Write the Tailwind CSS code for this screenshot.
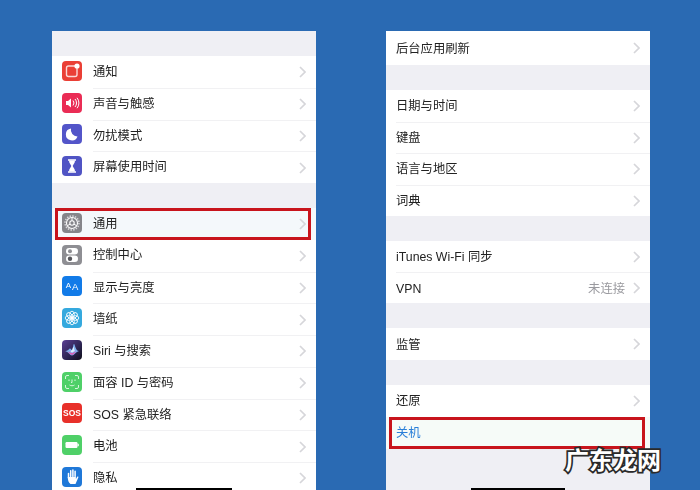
<!DOCTYPE html>
<html lang="zh-CN">
<head>
  <meta charset="UTF-8">
  <title>设置</title>
  <script src="https://cdn.jsdelivr.net/npm/@tailwindcss/browser@4"></script>
</head>
<body class="bg-[#2a6ab3] font-['Liberation_Sans','Noto_Sans_CJK_SC',sans-serif] text-[12.3px] text-[#222]">
  <div class="relative w-[700px] h-[490px] overflow-hidden flex pt-[31px] pl-[52px] gap-[70px]">

    <!-- Left phone -->
    <section class="w-[264px] h-[459px] shrink-0 bg-[#efeff4] overflow-hidden blur-[0.4px]">
      <div class="h-[25px]"></div>
      <div class="bg-white">
        <div class="h-[31.75px] flex items-center pl-[10px]">
          <svg class="w-[20px] h-[20px] shrink-0 mr-[11px] -mt-[2px]" viewBox="0 0 20 20"><rect width="20" height="20" rx="4" fill="#ea3f35"/><rect x="4.500" y="5" width="10.500" height="10.500" rx="2" fill="none" stroke="#fff" stroke-width="1.400" opacity=".8"/><circle cx="15" cy="5" r="2.600" fill="#fff"/></svg>
          <div class="flex-1 h-full flex items-center pr-[10px]">
            <span class="flex-1">通知</span>
            <svg class="w-[7px] h-[12px]" viewBox="0 0 7 12"><path d="M1 1l5 5-5 5" fill="none" stroke="#d6d6da" stroke-width="1.700"/></svg>
          </div>
        </div>
        <div class="h-[31.75px] flex items-center pl-[10px]">
          <svg class="w-[20px] h-[20px] shrink-0 mr-[11px] -mt-[2px]" viewBox="0 0 20 20"><rect width="20" height="20" rx="4" fill="#ea2c55"/><path d="M4 8h2l3-2.500v9L6 12H4z" fill="#fff"/><path d="M11 7.500a4 4 0 0 1 0 5M13 6a6 6 0 0 1 0 8M15 4.800a8 8 0 0 1 0 10.400" fill="none" stroke="#fff" stroke-width="1"/></svg>
          <div class="flex-1 h-full flex items-center pr-[10px] border-t border-[#f1f1f3]">
            <span class="flex-1">声音与触感</span>
            <svg class="w-[7px] h-[12px]" viewBox="0 0 7 12"><path d="M1 1l5 5-5 5" fill="none" stroke="#d6d6da" stroke-width="1.700"/></svg>
          </div>
        </div>
        <div class="h-[31.75px] flex items-center pl-[10px]">
          <svg class="w-[20px] h-[20px] shrink-0 mr-[11px] -mt-[2px]" viewBox="0 0 20 20"><rect width="20" height="20" rx="4" fill="#5355c9"/><path d="M9 4.500a6 6 0 1 0 6.500 8 6.500 6.500 0 0 1-6.500-8z" fill="#fff"/></svg>
          <div class="flex-1 h-full flex items-center pr-[10px] border-t border-[#f1f1f3]">
            <span class="flex-1">勿扰模式</span>
            <svg class="w-[7px] h-[12px]" viewBox="0 0 7 12"><path d="M1 1l5 5-5 5" fill="none" stroke="#d6d6da" stroke-width="1.700"/></svg>
          </div>
        </div>
        <div class="h-[31.75px] flex items-center pl-[10px]">
          <svg class="w-[20px] h-[20px] shrink-0 mr-[11px] -mt-[2px]" viewBox="0 0 20 20"><rect width="20" height="20" rx="4" fill="#5054c4"/><path d="M6 4h8M6 16h8" stroke="#fff" stroke-width="1.500"/><path d="M7 4.500h6c0 3-2 4-2.300 5.500.3 1.500 2.300 2.500 2.300 5.500H7c0-3 2-4 2.300-5.500C9 8.500 7 7.500 7 4.500z" fill="#fff"/></svg>
          <div class="flex-1 h-full flex items-center pr-[10px] border-t border-[#f1f1f3]">
            <span class="flex-1">屏幕使用时间</span>
            <svg class="w-[7px] h-[12px]" viewBox="0 0 7 12"><path d="M1 1l5 5-5 5" fill="none" stroke="#d6d6da" stroke-width="1.700"/></svg>
          </div>
        </div>
      </div>
      <div class="h-[25px]"></div>
      <div class="bg-white">
        <div class="relative h-[31.75px] flex items-center pl-[10px] bg-[#f4f8fb]">
          <svg class="w-[20px] h-[20px] shrink-0 mr-[11px] -mt-[2px]" viewBox="0 0 20 20"><rect width="20" height="20" rx="4" fill="#85858a"/><circle cx="10" cy="10" r="7" fill="none" stroke="#d8d8dc" stroke-width="1.500" stroke-dasharray="1.500 1.250"/><circle cx="10" cy="10" r="5.500" fill="none" stroke="#fff" stroke-width="1.100"/><circle cx="10" cy="10" r="2.200" fill="none" stroke="#fff" stroke-width="1.100"/><path d="M10 4.500v3.300M5.200 12.800l2.900-1.700M14.800 12.800l-2.900-1.700" stroke="#fff" stroke-width="1"/></svg>
          <div class="flex-1 h-full flex items-center pr-[10px]">
            <span class="flex-1">通用</span>
            <svg class="w-[7px] h-[12px]" viewBox="0 0 7 12"><path d="M1 1l5 5-5 5" fill="none" stroke="#d6d6da" stroke-width="1.700"/></svg>
          </div>
          <div class="absolute left-[3px] top-0 w-[256px] h-[32px] border-[3px] border-[#c8141c]"></div>
        </div>
        <div class="h-[31.75px] flex items-center pl-[10px]">
          <svg class="w-[20px] h-[20px] shrink-0 mr-[11px] -mt-[2px]" viewBox="0 0 20 20"><rect width="20" height="20" rx="4" fill="#8e8e93"/><rect x="4" y="3" width="12" height="6.500" rx="3.250" fill="#fff"/><circle cx="8" cy="6.250" r="2" fill="#8e8e93"/><rect x="4" y="10.500" width="12" height="6.500" rx="3.250" fill="#fff"/><circle cx="8" cy="13.750" r="2.200" fill="#55555a"/></svg>
          <div class="flex-1 h-full flex items-center pr-[10px]">
            <span class="flex-1">控制中心</span>
            <svg class="w-[7px] h-[12px]" viewBox="0 0 7 12"><path d="M1 1l5 5-5 5" fill="none" stroke="#d6d6da" stroke-width="1.700"/></svg>
          </div>
        </div>
        <div class="h-[31.75px] flex items-center pl-[10px]">
          <div class="w-[20px] h-[20px] shrink-0 mr-[11px] -mt-[2px] rounded-[4px] bg-[#127be8] text-white flex items-center justify-center gap-[1px] leading-none"><span class="text-[8px]">A</span><span class="text-[9.500px]">A</span></div>
          <div class="flex-1 h-full flex items-center pr-[10px] border-t border-[#f1f1f3]">
            <span class="flex-1">显示与亮度</span>
            <svg class="w-[7px] h-[12px]" viewBox="0 0 7 12"><path d="M1 1l5 5-5 5" fill="none" stroke="#d6d6da" stroke-width="1.700"/></svg>
          </div>
        </div>
        <div class="h-[31.75px] flex items-center pl-[10px]">
          <svg class="w-[20px] h-[20px] shrink-0 mr-[11px] -mt-[2px]" viewBox="0 0 20 20"><rect width="20" height="20" rx="4" fill="#35a9de"/><g fill="none" stroke="#fff" stroke-width=".9"><ellipse cx="10" cy="6.500" rx="2.300" ry="3.300"/><ellipse cx="10" cy="13.500" rx="2.300" ry="3.300"/><ellipse cx="6.500" cy="10" rx="3.300" ry="2.300"/><ellipse cx="13.500" cy="10" rx="3.300" ry="2.300"/><ellipse cx="7.500" cy="7.500" rx="2.300" ry="3.300" transform="rotate(-45 7.500 7.500)"/><ellipse cx="12.500" cy="7.500" rx="2.300" ry="3.300" transform="rotate(45 12.500 7.500)"/><ellipse cx="7.500" cy="12.500" rx="2.300" ry="3.300" transform="rotate(45 7.500 12.500)"/><ellipse cx="12.500" cy="12.500" rx="2.300" ry="3.300" transform="rotate(-45 12.500 12.500)"/></g></svg>
          <div class="flex-1 h-full flex items-center pr-[10px] border-t border-[#f1f1f3]">
            <span class="flex-1">墙纸</span>
            <svg class="w-[7px] h-[12px]" viewBox="0 0 7 12"><path d="M1 1l5 5-5 5" fill="none" stroke="#d6d6da" stroke-width="1.700"/></svg>
          </div>
        </div>
        <div class="h-[31.75px] flex items-center pl-[10px]">
          <svg class="w-[20px] h-[20px] shrink-0 mr-[11px] -mt-[2px]" viewBox="0 0 20 20"><defs><linearGradient id="siri" x1="0" y1="0" x2="1" y2="1"><stop offset="0" stop-color="#5b3f94"/><stop offset=".6" stop-color="#2b2350"/><stop offset="1" stop-color="#0e0e18"/></linearGradient></defs><rect width="20" height="20" rx="4" fill="url(#siri)"/><path d="M3 11c3.500 0 4-2.500 5-2.500S9 10 10 10s1-6 2-6 1.500 7 5 7c-3 .7-5 4.500-7 4.500S6.500 11.700 3 11z" fill="#7fb0ee"/><path d="M5.500 11.500c2 0 3 1.500 4.500 1.500s2.500-1.500 4.500-1.500c-1.800 1-3 3.500-4.500 3.500s-2.700-2.500-4.500-3.500z" fill="#d860b4"/><path d="M8.500 11c.7 0 1-1 1.500-1s.8-3 1.500-3 .5 3 1.500 4c-1 .2-2 1.500-3 1.500S9.200 11.400 8.500 11z" fill="#dfeeff"/></svg>
          <div class="flex-1 h-full flex items-center pr-[10px] border-t border-[#f1f1f3]">
            <span class="flex-1">Siri 与搜索</span>
            <svg class="w-[7px] h-[12px]" viewBox="0 0 7 12"><path d="M1 1l5 5-5 5" fill="none" stroke="#d6d6da" stroke-width="1.700"/></svg>
          </div>
        </div>
        <div class="h-[31.75px] flex items-center pl-[10px]">
          <svg class="w-[20px] h-[20px] shrink-0 mr-[11px] -mt-[2px]" viewBox="0 0 20 20"><rect width="20" height="20" rx="4" fill="#4fd068"/><path d="M3.500 7V5a1.500 1.500 0 0 1 1.500-1.500h2M13 3.500h2A1.500 1.500 0 0 1 16.500 5v2M3.500 13v2A1.500 1.500 0 0 0 5 16.500h2M13 16.500h2a1.500 1.500 0 0 0 1.500-1.500v-2M7 7.500v1.500M13 7.500v1.500M10 7.500v3H9M7.500 13c1.500 1 3.500 1 5 0" fill="none" stroke="#d8f5de" stroke-width="1"/></svg>
          <div class="flex-1 h-full flex items-center pr-[10px] border-t border-[#f1f1f3]">
            <span class="flex-1">面容 ID 与密码</span>
            <svg class="w-[7px] h-[12px]" viewBox="0 0 7 12"><path d="M1 1l5 5-5 5" fill="none" stroke="#d6d6da" stroke-width="1.700"/></svg>
          </div>
        </div>
        <div class="h-[31.75px] flex items-center pl-[10px]">
          <div class="w-[20px] h-[20px] shrink-0 mr-[11px] -mt-[2px] rounded-[4px] bg-[#e8302a] text-white flex items-center justify-center text-[8.500px] font-bold leading-none">SOS</div>
          <div class="flex-1 h-full flex items-center pr-[10px] border-t border-[#f1f1f3]">
            <span class="flex-1">SOS 紧急联络</span>
            <svg class="w-[7px] h-[12px]" viewBox="0 0 7 12"><path d="M1 1l5 5-5 5" fill="none" stroke="#d6d6da" stroke-width="1.700"/></svg>
          </div>
        </div>
        <div class="h-[31.75px] flex items-center pl-[10px]">
          <svg class="w-[20px] h-[20px] shrink-0 mr-[11px] -mt-[2px]" viewBox="0 0 20 20"><rect width="20" height="20" rx="4" fill="#4fd068"/><rect x="3.500" y="7" width="12" height="6" rx="1.200" fill="#fff"/><rect x="15.500" y="8.800" width="1.300" height="2.400" fill="#fff"/></svg>
          <div class="flex-1 h-full flex items-center pr-[10px] border-t border-[#f1f1f3]">
            <span class="flex-1">电池</span>
            <svg class="w-[7px] h-[12px]" viewBox="0 0 7 12"><path d="M1 1l5 5-5 5" fill="none" stroke="#d6d6da" stroke-width="1.700"/></svg>
          </div>
        </div>
        <div class="h-[31.75px] flex items-center pl-[10px]">
          <svg class="w-[20px] h-[20px] shrink-0 mr-[11px] -mt-[2px]" viewBox="0 0 20 20"><rect width="20" height="20" rx="4" fill="#1f78d8"/><path d="M6.500 11V6.500M8.700 9.500V3.700M10.900 9.500V3M13.100 9.500V4.200" stroke="#fff" stroke-width="1.500" stroke-linecap="round"/><path d="M5.800 10h8.100v2l1.300-2.200c.5-.8 1.500-.2 1.100.7L13.500 17H8.500C6.500 15.500 5.800 13.500 5.800 10z" fill="#fff"/></svg>
          <div class="flex-1 h-full flex items-center pr-[10px] border-t border-[#f1f1f3]">
            <span class="flex-1">隐私</span>
            <svg class="w-[7px] h-[12px]" viewBox="0 0 7 12"><path d="M1 1l5 5-5 5" fill="none" stroke="#d6d6da" stroke-width="1.700"/></svg>
          </div>
        </div>
      </div>
    </section>

    <!-- Right phone -->
    <section class="w-[264px] h-[459px] shrink-0 bg-[#efeff4] overflow-hidden blur-[0.4px]">
      <div class="bg-white">
        <div class="h-[34px] flex items-center pl-[10px] pr-[10px]">
          <span class="flex-1 pt-[2px]">后台应用刷新</span>
          <svg class="w-[7px] h-[12px]" viewBox="0 0 7 12"><path d="M1 1l5 5-5 5" fill="none" stroke="#d6d6da" stroke-width="1.700"/></svg>
        </div>
      </div>
      <div class="h-[25px]"></div>
      <div class="bg-white">
        <div class="h-[31.500px] flex items-center pl-[10px] pr-[10px]">
          <span class="flex-1">日期与时间</span>
          <svg class="w-[7px] h-[12px]" viewBox="0 0 7 12"><path d="M1 1l5 5-5 5" fill="none" stroke="#d6d6da" stroke-width="1.700"/></svg>
        </div>
        <div class="ml-[10px] h-[31.500px] flex items-center pr-[10px] border-t border-[#f1f1f3]">
          <span class="flex-1">键盘</span>
          <svg class="w-[7px] h-[12px]" viewBox="0 0 7 12"><path d="M1 1l5 5-5 5" fill="none" stroke="#d6d6da" stroke-width="1.700"/></svg>
        </div>
        <div class="ml-[10px] h-[31.500px] flex items-center pr-[10px] border-t border-[#f1f1f3]">
          <span class="flex-1">语言与地区</span>
          <svg class="w-[7px] h-[12px]" viewBox="0 0 7 12"><path d="M1 1l5 5-5 5" fill="none" stroke="#d6d6da" stroke-width="1.700"/></svg>
        </div>
        <div class="ml-[10px] h-[31.500px] flex items-center pr-[10px] border-t border-[#f1f1f3]">
          <span class="flex-1">词典</span>
          <svg class="w-[7px] h-[12px]" viewBox="0 0 7 12"><path d="M1 1l5 5-5 5" fill="none" stroke="#d6d6da" stroke-width="1.700"/></svg>
        </div>
      </div>
      <div class="h-[25px]"></div>
      <div class="bg-white">
        <div class="h-[31px] flex items-center pl-[10px] pr-[10px]">
          <span class="flex-1 pt-[2px]">iTunes Wi-Fi 同步</span>
          <svg class="w-[7px] h-[12px]" viewBox="0 0 7 12"><path d="M1 1l5 5-5 5" fill="none" stroke="#d6d6da" stroke-width="1.700"/></svg>
        </div>
        <div class="ml-[10px] h-[31px] flex items-center pr-[10px] border-t border-[#f1f1f3]">
          <span class="flex-1 pt-[2px]">VPN</span>
          <span class="text-[#9a9a9f] mr-[8px] pt-[2px]">未连接</span>
          <svg class="w-[7px] h-[12px]" viewBox="0 0 7 12"><path d="M1 1l5 5-5 5" fill="none" stroke="#d6d6da" stroke-width="1.700"/></svg>
        </div>
      </div>
      <div class="h-[25px]"></div>
      <div class="bg-white">
        <div class="h-[32px] flex items-center pl-[10px] pr-[10px]">
          <span class="flex-1 pt-[2px]">监管</span>
          <svg class="w-[7px] h-[12px]" viewBox="0 0 7 12"><path d="M1 1l5 5-5 5" fill="none" stroke="#d6d6da" stroke-width="1.700"/></svg>
        </div>
      </div>
      <div class="h-[25px]"></div>
      <div class="bg-white">
        <div class="h-[32px] flex items-center pl-[10px] pr-[10px]">
          <span class="flex-1">还原</span>
          <svg class="w-[7px] h-[12px]" viewBox="0 0 7 12"><path d="M1 1l5 5-5 5" fill="none" stroke="#d6d6da" stroke-width="1.700"/></svg>
        </div>
        <div class="relative h-[32px] flex items-center pl-[10px] pr-[10px] bg-[#f6fbf8] text-[#2a7fd8]">
          <span>关机</span>
          <div class="absolute left-[3px] top-0 w-[256px] h-[32px] border-[3px] border-[#c8141c]"></div>
        </div>
      </div>
    </section>

    <!-- Home indicators, watermark -->
    <div class="absolute left-[136px] top-[488px] w-[96px] h-[2px] bg-black"></div>
    <div class="absolute left-[471px] top-[488px] w-[94px] h-[2px] bg-black"></div>
    <div class="absolute left-[565px] top-[446px] text-[24px] leading-[30px] font-bold text-white [-webkit-text-stroke:3.5px_#2a2a2a] [paint-order:stroke_fill]">广东龙网</div>
  </div>
</body>
</html>
